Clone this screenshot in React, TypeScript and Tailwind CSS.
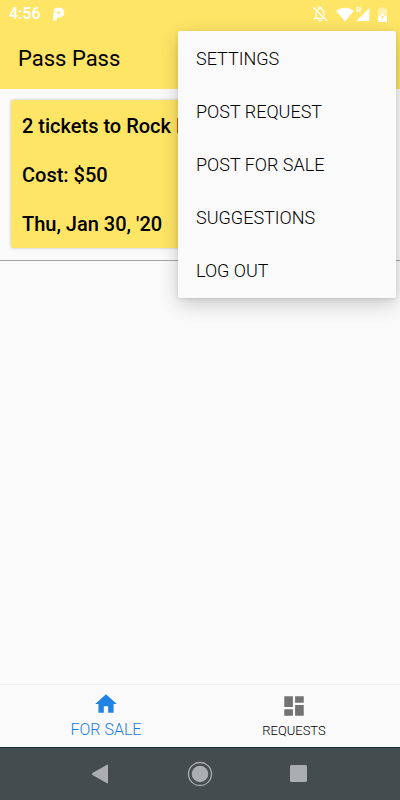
const menuItems = ['SETTINGS', 'POST REQUEST', 'POST FOR SALE', 'SUGGESTIONS', 'LOG OUT']

const listing = {
  title: '2 tickets to Rock Fest',
  cost: 'Cost: $50',
  date: "Thu, Jan 30, '20",
}

const StatusBar = () => (
  <div className="flex h-7 items-center justify-between pr-[13px] pl-[9px] text-white">
    <div className="flex items-center gap-3">
      <span className="text-base font-medium">4:56</span>
      <svg className="h-[14px] w-3" viewBox="0 0 12 14" fill="currentColor">
        <path
          fillRule="evenodd"
          d="M.5 2.8Q2.5 .5 6 .5A4.9 4.9 0 0 1 11.3 5.4C11.3 8.6 8.8 10.6 5.6 10.6H4.2L3.8 13.5H.2V7Q.4 5.6 1.5 5.2ZM4.4 4.2V6.9H5.8A1.35 1.35 0 0 0 5.8 4.2Z"
        />
      </svg>
    </div>
    <div className="flex items-center">
      <svg className="h-4 w-4" viewBox="0 0 16 16" fill="none" stroke="currentColor">
        <path d="M1.5 1.5 15 15" strokeWidth="1.4" />
        <path d="M5.5 3.7C6 3.2 6.6 3 7 2.9V1.5H9V2.9C11 3.4 12 5 12 7V9.5M4 6V11.5L2.8 12.5H11" strokeWidth="1.4" />
        <path d="M6.5 14h3a1.5 1.5 0 0 1-3 0Z" fill="currentColor" stroke="none" />
      </svg>
      <svg className="ml-2 h-[15px] w-[18px]" viewBox="0 0 18 15" fill="currentColor">
        <path d="M.3 4C5.5-.2 12.5-.2 17.7 4L9 14.5Z" />
      </svg>
      <svg className="ml-[2px] h-4 w-[14px]" viewBox="0 0 14 16" fill="currentColor">
        <path d="M13.3 2V15H.3Z" />
        <path d="M1.2 6.5V1.5H3.2a1.3 1.3 0 0 1 0 2.6H1.2M3 4.1 4.6 6.5" fill="none" stroke="currentColor" strokeWidth="1.2" />
      </svg>
      <svg className="ml-2 h-[15px] w-[9px]" viewBox="0 0 9 15" fill="currentColor">
        <path d="M3 0H6V1.5H8.2Q9 1.5 9 2.3V9H0V2.3Q0 1.5 .8 1.5H3Z" opacity=".45" />
        <path d="M0 9H3.5V12.5L6.3 9H9V14.2Q9 15 8.2 15H.8Q0 15 0 14.2Z" />
        <path d="M5 4 2.5 8.8H4V9H6V7.8H5Z" />
      </svg>
    </div>
  </div>
)

const OverflowMenu = () => (
  <div
    role="menu"
    className="absolute top-[31px] right-1 z-10 flex w-[218px] flex-col rounded-xs bg-[#fafafa] py-px shadow-[0_6px_20px_rgba(0,0,0,0.2),0_1px_4px_rgba(0,0,0,0.1)]"
  >
    {menuItems.map((item) => (
      <button key={item} role="menuitem" className="h-[53px] px-[18px] text-left text-lg font-light text-black">
        {item}
      </button>
    ))}
  </div>
)

const TabBar = () => (
  <nav className="flex h-[63px] border-t border-[#eeeeee]">
    <div className="flex flex-1 justify-center pl-3">
      <button className="flex flex-col items-center gap-px pt-[6px] text-base leading-6 font-light text-[#1a7be0]">
        <svg className="h-[26px] w-[26px] text-[#2184e4]" viewBox="0 0 24 24" fill="currentColor">
          <path d="M10 20v-6h4v6h5v-8h3L12 3 2 12h3v8z" />
        </svg>
        FOR SALE
      </button>
    </div>
    <div className="flex flex-1 justify-center pr-3">
      <button className="flex flex-col items-center pt-2 text-[13px] leading-6 font-light text-black">
        <svg className="h-[26px] w-[26px] text-[#737373]" viewBox="0 0 24 24" fill="currentColor">
          <path d="M3 13h8V3H3v10zm0 8h8v-6H3v6zm10 0h8V11h-8v10zm0-18v6h8V3h-8z" />
        </svg>
        REQUESTS
      </button>
    </div>
  </nav>
)

const SystemNav = () => (
  <div className="flex h-[53px] items-center justify-center gap-[74px] border-t border-[#0f2f38] bg-[#454c50] text-[#abaeb1]">
    <button aria-label="Back">
      <svg className="h-6 w-6" viewBox="0 0 24 24" fill="currentColor">
        <path d="M19 3.5V20.5Q19 22 17.5 21L3.5 13Q2.5 12 3.5 11L17.5 3Q19 2 19 3.5Z" />
      </svg>
    </button>
    <button aria-label="Home">
      <svg className="h-[26px] w-[26px]" viewBox="0 0 26 26" fill="currentColor">
        <circle cx="13" cy="13" r="11.5" fill="none" stroke="currentColor" strokeWidth="1.3" />
        <circle cx="13" cy="13" r="8.3" />
      </svg>
    </button>
    <button aria-label="Recent apps">
      <svg className="h-6 w-6" viewBox="0 0 24 24" fill="currentColor">
        <rect x="3" y="3" width="17" height="17" rx="1.5" />
      </svg>
    </button>
  </div>
)

const App = () => {
  return (
    <div className="relative flex min-h-screen flex-col bg-[#fafafa] font-[Roboto,sans-serif]">
      <header className="bg-[#ffe566]">
        <StatusBar />
        <h1 className="px-[18px] pt-[15px] pb-[14px] text-[22px] leading-8 font-normal text-black">Pass Pass</h1>
      </header>
      <OverflowMenu />
      <main className="grow">
        <div className="border-b border-[#a6a6a6] px-[11px] pt-[11px] pb-3">
          <article className="flex flex-col gap-[25px] overflow-hidden rounded-xs bg-[#ffe566] px-[11px] pt-[14px] pb-3 text-xl leading-6 font-medium whitespace-nowrap text-black shadow-[0_0_3px_rgba(0,0,0,0.25)]">
            <h2>{listing.title}</h2>
            <p>{listing.cost}</p>
            <p>{listing.date}</p>
          </article>
        </div>
      </main>
      <TabBar />
      <SystemNav />
    </div>
  )
}

export default App
